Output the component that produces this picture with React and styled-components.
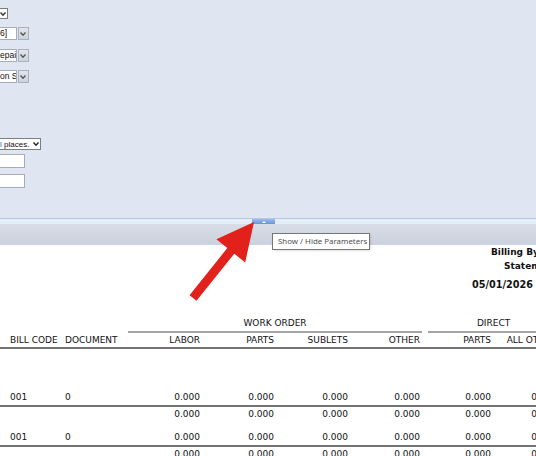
import React from "react";
import styled, { createGlobalStyle } from "styled-components";

const GlobalStyle = createGlobalStyle`
  html, body {
    margin: 0;
    padding: 0;
    overflow: hidden;
    background: #ffffff;
  }
  body {
    font-family: "DejaVu Sans", Verdana, sans-serif;
  }
`;

const Page = styled.div`
  position: relative;
  width: 536px;
  height: 456px;
  overflow: hidden;
  background: #ffffff;
`;

/* ---------- parameter panel ---------- */

const ParamPanel = styled.div`
  height: 218px;
  background: #dfe6f1;
  display: flex;
  flex-direction: column;
  box-sizing: border-box;
`;

const ParamRow = styled.div`
  display: flex;
  align-items: center;
  margin-top: ${(p) => p.$top}px;
  height: ${(p) => p.$h}px;
`;

const SelectBox = styled.div`
  display: flex;
  align-items: center;
  box-sizing: border-box;
  width: ${(p) => p.$w}px;
  height: 100%;
  background: #ffffff;
  border: 1px solid #7d7d7d;
  border-left: none;
  font-family: "Liberation Sans", Arial, sans-serif;
  font-size: 8px;
  color: #111;
  white-space: nowrap;
  overflow: hidden;
`;

const SelectText = styled.span`
  flex: 1;
  overflow: hidden;
`;

const Highlight = styled.span`
  color: #1f63c6;
`;

const ComboText = styled.div`
  box-sizing: border-box;
  width: ${(p) => p.$w}px;
  height: 100%;
  background: #ffffff;
  border: 1px solid #a6adb8;
  border-left: none;
  font-family: "Liberation Sans", Arial, sans-serif;
  font-size: 8.5px;
  line-height: 11px;
  color: #111;
  white-space: nowrap;
  overflow: hidden;
`;

const DropButton = styled.div`
  box-sizing: border-box;
  width: 11px;
  height: 100%;
  margin-left: 1px;
  background: linear-gradient(#e1e5ec, #cdd3dc);
  border: 1px solid #a9b1bc;
  display: flex;
  align-items: center;
  justify-content: center;
`;

const Chevron = ({ color = "#333" }) => (
  <svg width="6" height="4" viewBox="0 0 6 4" style={{ flex: "none", marginRight: 1 }}>
    <path d="M0.5 0.6 L3 3.2 L5.5 0.6" fill="none" stroke={color} strokeWidth="1.4" />
  </svg>
);

/* ---------- splitter ---------- */

const Splitter = styled.div`
  border-top: 1px solid #b6c7df;
  border-bottom: 1px solid #c5d4e9;
`;

const SplitTop = styled.div`
  height: 5px;
  background: #e3eef9;
  display: flex;
  justify-content: center;
  padding-right: 9px;
`;

const SplitButton = styled.div`
  width: 23px;
  height: 5px;
  background: linear-gradient(#9dbbee, #6893e0);
  display: flex;
  align-items: center;
  justify-content: center;
`;

const UpTriangle = styled.div`
  width: 0;
  height: 0;
  border-left: 2px solid transparent;
  border-right: 2px solid transparent;
  border-bottom: 2px solid #ffffff;
`;

const SplitBand = styled.div`
  height: 20px;
  background: linear-gradient(#d8dde7, #ccd2dd);
`;

/* ---------- report ---------- */

const Report = styled.div`
  width: 600px;
  color: #111;
`;

const TitleLine = styled.div`
  font-family: "DejaVu Sans", Verdana, sans-serif;
  font-weight: bold;
  font-size: ${(p) => p.$size || 9}px;
  line-height: 14px;
  white-space: nowrap;
  padding-left: ${(p) => p.$indent}px;
  margin-top: ${(p) => p.$top || 0}px;
`;

const Table = styled.table`
  table-layout: fixed;
  border-collapse: separate;
  border-spacing: 0;
  width: 559px;
  margin-top: 23px;
  font-family: "DejaVu Sans", Verdana, sans-serif;
  font-size: 9px;
  color: #111;

  td,
  th {
    padding: 0;
    white-space: nowrap;
    overflow: hidden;
  }
`;

const GroupCell = styled.th`
  font-weight: normal;
  line-height: 16px;
  text-align: center;
  border-bottom: 2px solid ${(p) => (p.$line ? "#a3a3a3" : "transparent")};
`;

const HeadCell = styled.th`
  font-weight: normal;
  line-height: 14px;
  text-align: ${(p) => (p.$num ? "right" : "left")};
  padding-left: ${(p) => p.$pl || 0}px !important;
  padding-right: ${(p) => (p.$num ? 2 : 0)}px !important;
  border-bottom: 2px solid #737373;
`;

const DataCell = styled.td`
  line-height: ${(p) => p.$lh}px;
  text-align: ${(p) => (p.$num ? "right" : "left")};
  padding-left: ${(p) => p.$pl || 0}px !important;
  padding-right: ${(p) => (p.$num ? 2 : 0)}px !important;
  padding-bottom: ${(p) => p.$pb || 0}px !important;
  vertical-align: top;
  border-bottom: ${(p) => (p.$line ? "2px solid #737373" : "none")};
`;

const SpacerRow = styled.tr`
  height: ${(p) => p.$h}px;
`;

/* ---------- overlays ---------- */

const Tooltip = styled.div`
  position: absolute;
  left: 272px;
  top: 233px;
  box-sizing: border-box;
  width: 98px;
  height: 17px;
  padding-left: 5px;
  background: #ffffff;
  border: 1px solid #767676;
  box-shadow: 1px 1px 2px rgba(0, 0, 0, 0.12);
  font-family: "Noto Sans", "Open Sans", sans-serif;
  font-size: 7.9px;
  line-height: 15px;
  color: #4f4f4f;
  white-space: nowrap;
`;

const ArrowLayer = styled.svg`
  position: absolute;
  left: 0;
  top: 0;
  pointer-events: none;
`;

const COLS = [60, 68, 74, 74, 74, 72, 6, 65, 66];
const NUMS = ["0.000", "0.000", "0.000", "0.000", null, "0.000", "0.000"];

function NumberCells({ lh, line, pb }) {
  return NUMS.map((v, i) =>
    v === null ? (
      <DataCell key={i} $lh={lh} $line={line} $pb={pb} />
    ) : (
      <DataCell key={i} $num $lh={lh} $line={line} $pb={pb}>
        {v}
      </DataCell>
    )
  );
}

function BillRows({ last }) {
  return (
    <>
      <tr>
        <DataCell $lh={16} $pl={10} $line>
          001
        </DataCell>
        <DataCell $lh={16} $pl={5} $line>
          0
        </DataCell>
        <NumberCells lh={16} line />
      </tr>
      <tr>
        <DataCell $lh={14} $pb={last ? 0 : 8} />
        <DataCell $lh={14} $pb={last ? 0 : 8} />
        <NumberCells lh={14} pb={last ? 0 : 8} />
      </tr>
    </>
  );
}

export default function App() {
  return (
    <Page>
      <GlobalStyle />
      <ParamPanel>
        <ParamRow $top={8} $h={11}>
          <SelectBox $w={8}>
            <Chevron />
          </SelectBox>
        </ParamRow>
        <ParamRow $top={8} $h={13}>
          <ComboText $w={17}>6]</ComboText>
          <DropButton>
            <Chevron color="#555" />
          </DropButton>
        </ParamRow>
        <ParamRow $top={9} $h={13}>
          <ComboText $w={17}>epai</ComboText>
          <DropButton>
            <Chevron color="#555" />
          </DropButton>
        </ParamRow>
        <ParamRow $top={8} $h={13}>
          <ComboText $w={17}>on St</ComboText>
          <DropButton>
            <Chevron color="#555" />
          </DropButton>
        </ParamRow>
        <ParamRow $top={55} $h={12}>
          <SelectBox $w={41}>
            <SelectText>
              <Highlight>l</Highlight> places.
            </SelectText>
            <Chevron color="#222" />
          </SelectBox>
        </ParamRow>
        <ParamRow $top={4} $h={14}>
          <ComboText $w={25} />
        </ParamRow>
        <ParamRow $top={6} $h={14}>
          <ComboText $w={25} />
        </ParamRow>
      </ParamPanel>

      <Splitter>
        <SplitTop>
          <SplitButton>
            <UpTriangle />
          </SplitButton>
        </SplitTop>
        <SplitBand />
      </Splitter>

      <Report>
        <TitleLine $indent={491}>Billing By Customer</TitleLine>
        <TitleLine $indent={504}>Statement</TitleLine>
        <TitleLine $indent={472} $top={5} $size={9.7}>
          05/01/2026 - 05/31/2026
        </TitleLine>

        <Table>
          <colgroup>
            {COLS.map((w, i) => (
              <col key={i} style={{ width: w }} />
            ))}
          </colgroup>
          <thead>
            <tr>
              <GroupCell />
              <GroupCell />
              <GroupCell colSpan={4} $line>
                WORK ORDER
              </GroupCell>
              <GroupCell />
              <GroupCell colSpan={2} $line>
                DIRECT
              </GroupCell>
            </tr>
            <tr>
              <HeadCell $pl={10}>BILL CODE</HeadCell>
              <HeadCell $pl={5}>DOCUMENT</HeadCell>
              <HeadCell $num>LABOR</HeadCell>
              <HeadCell $num>PARTS</HeadCell>
              <HeadCell $num>SUBLETS</HeadCell>
              <HeadCell $num>OTHER</HeadCell>
              <HeadCell />
              <HeadCell $num>PARTS</HeadCell>
              <HeadCell $num>ALL OTHER</HeadCell>
            </tr>
          </thead>
          <tbody>
            <SpacerRow $h={40}>
              <td colSpan={9} />
            </SpacerRow>
            <BillRows />
            <BillRows last />
          </tbody>
        </Table>
      </Report>

      <Tooltip>Show / Hide Parameters</Tooltip>

      <ArrowLayer width="536" height="456" viewBox="0 0 536 456">
        <polygon
          points="189.5,295.2 227.3,248.1 216.4,239.3 254,222 245.2,262.5 234.3,253.7 196.5,300.8"
          fill="#e3211c"
        />
      </ArrowLayer>
    </Page>
  );
}
